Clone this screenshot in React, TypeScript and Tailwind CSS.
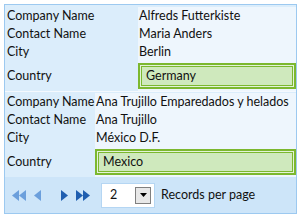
import React from "react";

type Rec = { company: string; contact: string; city: string; country: string };

const records: Rec[] = [
  { company: "Alfreds Futterkiste", contact: "Maria Anders", city: "Berlin", country: "Germany" },
  { company: "Ana Trujillo Emparedados y helados", contact: "Ana Trujillo", city: "México D.F.", country: "Mexico" },
];

function Row({ label, value, w }: { label: string; value: string; w: string }) {
  return (
    <div className="flex h-[18px]">
      <div className={`${w} shrink-0 bg-[#dbedfb] pl-[2px] leading-[18px] whitespace-nowrap`}>{label}</div>
      <div className="flex-1 bg-[#eef6fd] pl-[1px] leading-[18px] whitespace-nowrap overflow-hidden">{value}</div>
    </div>
  );
}

function Record({ rec, w, first }: { rec: Rec; w: string; first?: boolean }) {
  return (
    <div className={first ? "pt-[2px] bg-[#dbedfb]" : "pt-[1px] bg-[#dbedfb] border-t border-[#f4f9fe]"}>
      <Row label="Company Name" value={rec.company} w={w} />
      <Row label="Contact Name" value={rec.contact} w={w} />
      <Row label="City" value={rec.city} w={w} />
      <div className="flex h-[30px]">
        <div className={`${w} shrink-0 bg-[#dbedfb] pl-[2px] leading-[30px]`}>Country</div>
        <div className="flex-1 bg-[#eef6fd] py-[2px]">
          <div className="h-full border-2 border-[#7cb82f] bg-[#e3f2d8] p-[1px]">
            <div className="h-full border border-[#7cb82f] bg-[#cfe9bd] pl-[4px] leading-[18px]">
              {rec.country}
            </div>
          </div>
        </div>
      </div>
    </div>
  );
}

function Tri({ dir, color }: { dir: "l" | "r"; color: string }) {
  return (
    <svg width="7" height="11" viewBox="0 0 7 11">
      {dir === "l" ? (
        <path d="M7 0 L0 5.5 L7 11 Z" fill={color} />
      ) : (
        <path d="M0 0 L7 5.5 L0 11 Z" fill={color} />
      )}
    </svg>
  );
}

export default function App() {
  return (
    <div className="w-[300px] h-[217px] bg-white pl-[4px] pt-[4px] text-[12.5px] text-[#111]" style={{ fontFamily: 'Lato, "Liberation Sans", sans-serif' }}>
      <div className="w-[293px] h-[210px] border border-[#9cc9f0] bg-[#cde5f9] flex flex-col">
        <Record rec={records[0]} w="w-[133px]" first />
        <Record rec={records[1]} w="w-[90px]" />
        <div className="flex-1 flex items-center bg-[#cde5f9] pl-[7px]">
          <div className="flex items-center">
            <Tri dir="l" color="#6b9fdc" />
            <Tri dir="l" color="#6b9fdc" />
          </div>
          <div className="ml-[8px] flex items-center">
            <Tri dir="l" color="#6b9fdc" />
          </div>
          <div className="ml-[20px] flex items-center">
            <Tri dir="r" color="#1f5eb0" />
          </div>
          <div className="ml-[8px] flex items-center">
            <Tri dir="r" color="#1f5eb0" />
            <Tri dir="r" color="#1f5eb0" />
          </div>
          <div className="ml-[11px] w-[54px] h-[25px] bg-white border border-[#b5d6f3] flex items-center justify-between pl-[8px] pr-[3px]">
            <span>2</span>
            <div className="w-[16px] h-[17px] border border-[#808080] bg-[#e8e8e8] flex items-center justify-center">
              <svg width="7" height="4" viewBox="0 0 7 4">
                <path d="M0 0 L7 0 L3.5 4 Z" fill="#000" />
              </svg>
            </div>
          </div>
          <span className="ml-[6px]">Records per page</span>
        </div>
      </div>
    </div>
  );
}
